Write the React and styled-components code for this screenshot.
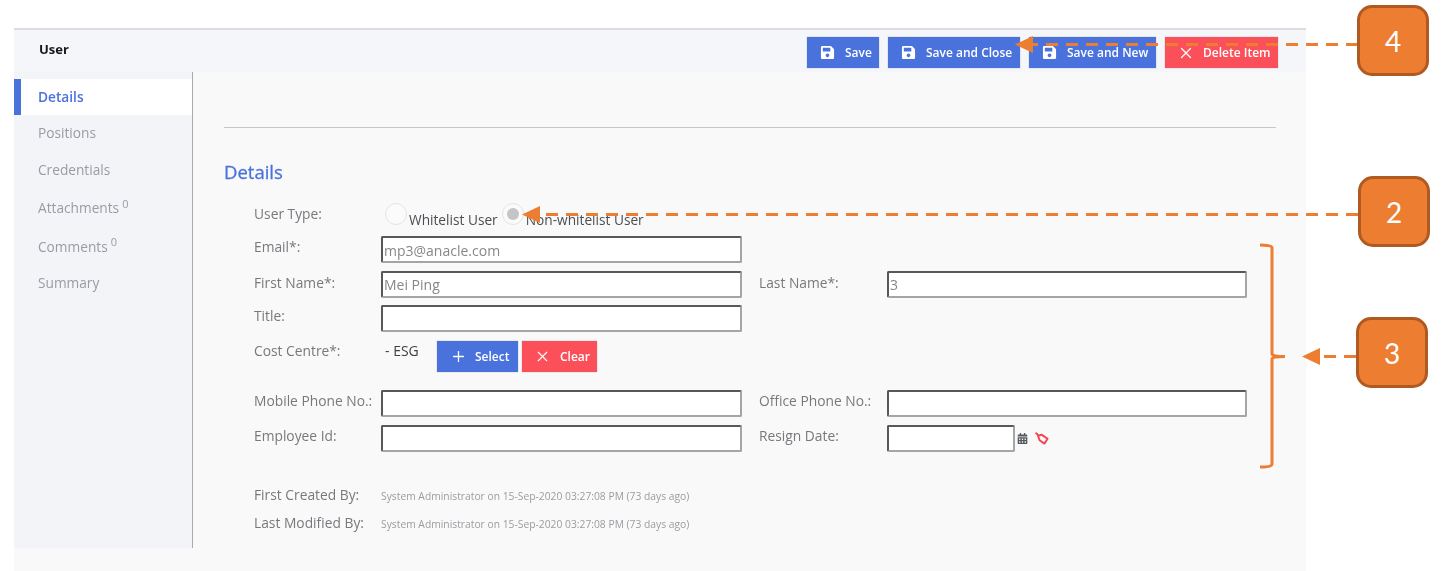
import React from "react";
import styled, { createGlobalStyle } from "styled-components";
import { FaSave, FaCalendarAlt } from "react-icons/fa";
import { Plus, X } from "lucide-react";

const Global = createGlobalStyle`
  html, body { margin: 0; padding: 0; background: #fff; }
  body { font-family: "Open Sans", "Liberation Sans", sans-serif; }
  * { box-sizing: border-box; }
`;
const Page = styled.div`
  position: relative;
  width: 1447px;
  height: 571px;
  padding: 28px 141px 0 14px;
  overflow: hidden;
`;
const Panel = styled.div`
  height: 543px;
  background: #f9f9fa;
  border-top: 2px solid #dcdde0;
  filter: blur(0.45px);
`;
const TitleBar = styled.header`
  height: 42px;
  background: #f4f6f9;
  display: flex;
  align-items: flex-start;
  justify-content: space-between;
  padding: 7px 28px 0 25px;
`;
const Title = styled.h1`
  margin: 2px 0 0;
  font-size: 13px;
  line-height: 20px;
  font-weight: 700;
  color: #15171c;
`;
const Actions = styled.div`
  display: flex;
  gap: 9px;
`;
const Btn = styled.button`
  height: 31px;
  width: ${(p) => p.$w}px;
  border: 0;
  padding: 0 0 0 ${(p) => p.$pad || 12}px;
  display: flex;
  align-items: center;
  gap: ${(p) => p.$gap || 10}px;
  background: ${(p) => (p.$danger ? "#fb505a" : "#4a72dc")};
  color: #fff;
  font: 600 12px/1 "Open Sans", sans-serif;
  white-space: nowrap;
  box-shadow: 0 0 1px rgba(80, 90, 120, 0.5);
`;
const Body = styled.div`
  display: flex;
  height: 476px;
`;
const Sidebar = styled.nav`
  width: 179px;
  flex: none;
  background: #f2f4f8;
  border-right: 1px solid #a9abae;
  padding-top: 7px;
`;
const NavItem = styled.div`
  height: ${(p) => (p.$sup ? 38.5 : 36.4)}px;
  padding-left: ${(p) => (p.$active ? 17 : 24)}px;
  border-left: ${(p) => (p.$active ? "7px solid #4a72dc" : "0")};
  background: ${(p) => (p.$active ? "#fff" : "transparent")};
  color: ${(p) => (p.$active ? "#4a72dc" : "#999ca3")};
  font-size: 13.7px;
  font-weight: ${(p) => (p.$active ? 600 : 400)};
  line-height: ${(p) => (p.$sup ? 39 : 35)}px;
  sup {
    font-size: 11px;
    line-height: 0;
    margin-left: 3px;
  }
`;
const Main = styled.main`
  flex: 1;
  padding: 55px 30px 0 31px;
`;
const Divider = styled.hr`
  margin: 0;
  border: 0;
  border-top: 1px solid #c6c7c9;
`;
const Heading = styled.h2`
  margin: 32px 0 17px;
  font-size: 18.5px;
  line-height: 24px;
  font-weight: 400;
  -webkit-text-stroke: 0.3px #4a72dc;
  color: #4a72dc;
`;
const Form = styled.div`
  padding-left: 30px;
`;
const Row = styled.div`
  display: grid;
  grid-template-columns: 127px 361px 17px 128px 360px;
  height: ${(p) => p.$h}px;
`;
const Label = styled.label`
  font-size: 13.8px;
  line-height: 20px;
  color: #77797c;
  white-space: nowrap;
  padding-top: ${(p) => p.$top ?? 1}px;
`;
const Field = styled.input`
  height: 27px;
  width: ${(p) => p.$w || "100%"}${(p) => (p.$w ? "px" : "")};
  border: 2px solid #a4a5a6;
  border-top-color: #57585a;
  border-left-color: #57585a;
  border-radius: 2px;
  background: #fff;
  padding: 1px 1px 0;
  color: #85878a;
  font: 14px "Open Sans", sans-serif;
  outline: none;
`;
const RadioGroup = styled.div`
  grid-column: 2 / 5;
  display: flex;
  padding: 2px 0 0 4px;
`;
const Radio = styled.span`
  width: 22px;
  height: 22px;
  flex: none;
  border-radius: 50%;
  background: #fbfbfb;
  border: 1px solid #e4e4e4;
  display: flex;
  align-items: center;
  justify-content: center;
  &::after {
    content: "";
    width: 12px;
    height: 12px;
    border-radius: 50%;
    background: ${(p) => (p.$on ? "#c4c5c7" : "transparent")};
  }
`;
const RadioText = styled.span`
  margin: 7px 4px 0 2px;
  font-size: 13.7px;
  line-height: 20px;
  color: #4c4e52;
  white-space: nowrap;
`;
const CostCell = styled.div`
  grid-column: 2 / 5;
  display: flex;
  align-items: flex-start;
`;
const CostValue = styled.span`
  width: 56px;
  padding: 0 0 0 4px;
  font-size: 14px;
  line-height: 20px;
  color: #3d3f43;
`;
const CostActions = styled.div`
  display: flex;
  gap: 4px;
`;
const DateCell = styled.div`
  display: flex;
  align-items: center;
  height: 27px;
  gap: 2px;
`;
const ClearGlyph = styled.svg`
  margin-left: 5px;
  flex: none;
`;
const Foot = styled.div`
  margin-top: 21px;
`;
const FootRow = styled.div`
  display: grid;
  grid-template-columns: 127px 1fr;
  height: 28px;
  align-items: center;
`;
const FootValue = styled.span`
  font-size: 10.3px;
  padding-top: 2px;
  color: #9a9ca0;
  white-space: nowrap;
`;
const Overlay = styled.svg`
  position: absolute;
  inset: 0;
  pointer-events: none;
`;
const Callout = styled.div`
  position: absolute;
  left: ${(p) => p.$x}px;
  top: ${(p) => p.$y}px;
  width: 72px;
  height: 71px;
  background: #ed7d31;
  border: 3px solid #ae5a21;
  border-radius: 15px;
  color: #fff;
  font: 28px/66px Lato, sans-serif;
  text-align: center;
`;

const SaveBtn = ({ w, children }) => (
  <Btn $w={w} $pad={13}>
    <FaSave size={15} />
    {children}
  </Btn>
);
const ClearIcon = () => (
  <ClearGlyph width="14" height="13" viewBox="0 0 14 13" fill="none" stroke="#f2454f" strokeWidth="1.9" strokeLinejoin="round">
    <path d="M0.5 0.8 L3.5 3.2" />
    <path d="M3 4 L6.5 2.6 L12.6 6.8 L9.4 11.6 L4.6 8.2 Z" />
  </ClearGlyph>
);

export default function App() {
  return (
    <Page>
      <Global />
      <Panel>
        <TitleBar>
          <Title>User</Title>
          <Actions>
            <SaveBtn w={72}>Save</SaveBtn>
            <SaveBtn w={132}>Save and Close</SaveBtn>
            <SaveBtn w={127}>Save and New</SaveBtn>
            <Btn $w={113} $danger $pad={12} $gap={8}>
              <X size={18} strokeWidth={1.6} />
              Delete Item
            </Btn>
          </Actions>
        </TitleBar>
        <Body>
          <Sidebar>
            <NavItem $active>Details</NavItem>
            <NavItem>Positions</NavItem>
            <NavItem>Credentials</NavItem>
            <NavItem $sup>Attachments<sup>0</sup></NavItem>
            <NavItem $sup>Comments<sup>0</sup></NavItem>
            <NavItem>Summary</NavItem>
          </Sidebar>
          <Main>
            <Divider />
            <Heading>Details</Heading>
            <Form>
              <Row $h={35}>
                <Label $top={3}>User Type:</Label>
                <RadioGroup>
                  <Radio />
                  <RadioText>Whitelist User</RadioText>
                  <Radio $on />
                  <RadioText>Non-whitelist User</RadioText>
                </RadioGroup>
              </Row>
              <Row $h={34.5}>
                <Label>Email*:</Label>
                <Field readOnly value="mp3@anacle.com" />
              </Row>
              <Row $h={34.5}>
                <Label $top={2}>First Name*:</Label>
                <Field readOnly value="Mei Ping" />
                <span />
                <Label $top={2}>Last Name*:</Label>
                <Field readOnly value="3" />
              </Row>
              <Row $h={36}>
                <Label>Title:</Label>
                <Field readOnly value="" />
              </Row>
              <Row $h={49}>
                <Label $top={0}>Cost Centre*:</Label>
                <CostCell>
                  <CostValue>- ESG</CostValue>
                  <CostActions>
                    <Btn $w={81} $pad={13} $gap={8}>
                      <Plus size={17} strokeWidth={1.8} />
                      Select
                    </Btn>
                    <Btn $w={75} $danger $pad={12} $gap={9}>
                      <X size={17} strokeWidth={1.6} />
                      Clear
                    </Btn>
                  </CostActions>
                </CostCell>
              </Row>
              <Row $h={35}>
                <Label>Mobile Phone No.:</Label>
                <Field readOnly value="" />
                <span />
                <Label>Office Phone No.:</Label>
                <Field readOnly value="" />
              </Row>
              <Row $h={35}>
                <Label>Employee Id:</Label>
                <Field readOnly value="" />
                <span />
                <Label>Resign Date:</Label>
                <DateCell>
                  <Field readOnly value="" $w={128} />
                  <FaCalendarAlt size={11} color="#55585c" />
                  <ClearIcon />
                </DateCell>
              </Row>
              <Foot>
                <FootRow>
                  <Label $top={0}>First Created By:</Label>
                  <FootValue>System Administrator on 15-Sep-2020 03:27:08 PM (73 days ago)</FootValue>
                </FootRow>
                <FootRow>
                  <Label $top={0}>Last Modified By:</Label>
                  <FootValue>System Administrator on 15-Sep-2020 03:27:08 PM (73 days ago)</FootValue>
                </FootRow>
              </Foot>
            </Form>
          </Main>
        </Body>
      </Panel>

      <Overlay width="1447" height="571" viewBox="0 0 1447 571">
        <g stroke="#ed7d31" strokeWidth="3" fill="none" strokeDasharray="12 8">
          <path d="M1358 44.5 H1033" />
          <path d="M1358 214.5 H540" />
          <path d="M1356 356.5 H1320" />
        </g>
        <g fill="#ed7d31">
          <path d="M1015 44.5 L1033 36 V53 Z" />
          <path d="M522 214.5 L540 206 V223 Z" />
          <path d="M1302 356.5 L1320 348 V365 Z" />
        </g>
        <path
          d="M1260 245 Q1272 245 1272 248 V354 Q1272 356.5 1285 356.5 Q1272 356.5 1272 359 V464 Q1272 467 1260 467"
          fill="none"
          stroke="#ed7d31"
          strokeWidth="3"
        />
      </Overlay>
      <Callout $x={1357} $y={5}>4</Callout>
      <Callout $x={1358} $y={176}>2</Callout>
      <Callout $x={1356} $y={317}>3</Callout>
    </Page>
  );
}
